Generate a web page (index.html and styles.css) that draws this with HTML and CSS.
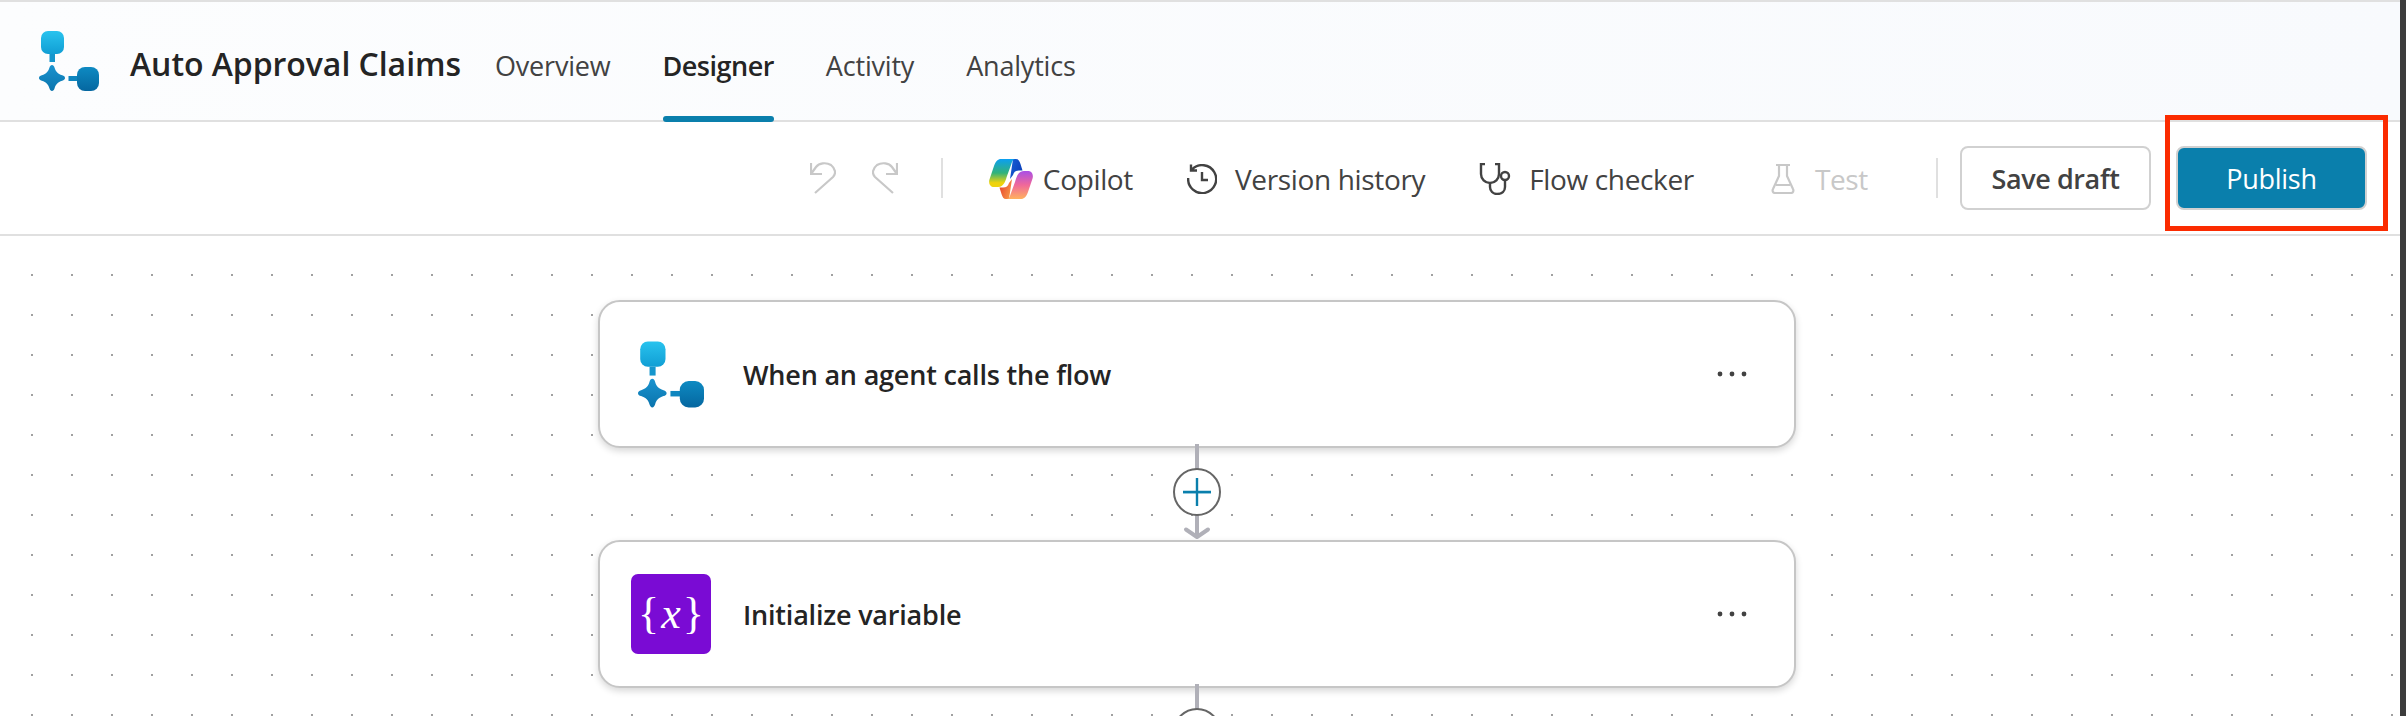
FILE: index.html
```html
<!DOCTYPE html>
<html lang="en">
  <head>
    <meta charset="UTF-8" />
    <title>Auto Approval Claims</title>
    <link rel="stylesheet" href="styles.css">
  </head>
  <body>
    <svg class="defs" width="0" height="0">
      <defs>
        <linearGradient id="g-top" x1="0" y1="0" x2="0" y2="1"><stop offset="0" stop-color="#29c3ee" /><stop offset="1" stop-color="#119ed4" /></linearGradient>
        <linearGradient id="g-star" x1="0" y1="0" x2="0" y2="1"><stop offset="0" stop-color="#1a93cf" /><stop offset="1" stop-color="#0a74ad" /></linearGradient>
        <linearGradient id="g-right" x1="0" y1="0" x2="0" y2="1"><stop offset="0" stop-color="#0e8ac2" /><stop offset="1" stop-color="#0567a0" /></linearGradient>
        <linearGradient id="g-left" x1="0" y1="0" x2="0" y2="1"><stop offset="0" stop-color="#0b9ff2" /><stop offset="0.5" stop-color="#32b27a" /><stop offset="0.85" stop-color="#efd30c" /></linearGradient>
        <linearGradient id="g-rib" x1="0" y1="0" x2="0" y2="1"><stop offset="0" stop-color="#ffb25e" /><stop offset="0.5" stop-color="#f0689a" /><stop offset="1" stop-color="#a94fe6" /></linearGradient>
        <linearGradient id="g-blue" x1="0" y1="0" x2="1" y2="0.6"><stop offset="0" stop-color="#1560d8" /><stop offset="1" stop-color="#0c3fb8" /></linearGradient>
        <linearGradient id="g-red" x1="0" y1="0" x2="1" y2="0.6"><stop offset="0" stop-color="#f9a34a" /><stop offset="1" stop-color="#e8492f" /></linearGradient>
        <symbol id="agent" viewBox="0 0 60 61">
          <rect x="2" y="0" width="23" height="23" rx="7" fill="url(#g-top)" />
          <rect x="10.5" y="23" width="5.5" height="8" fill="#1596cd" />
          <path d="M13 34c1.200 0 2 1 2.600 2.800 1 3.600 3 6 7.600 7.500 1.800.6 2.800 1.400 2.800 2.700s-1 2.100-2.800 2.700c-4.600 1.500-6.600 3.900-7.600 7.500-.6 1.800-1.400 2.800-2.600 2.800s-2-1-2.600-2.800c-1-3.600-3-6-7.600-7.500C1 49.100 0 48.300 0 47s1-2.100 2.800-2.700c4.600-1.500 6.600-3.900 7.600-7.500.6-1.800 1.400-2.800 2.600-2.800z" fill="url(#g-star)" />
          <rect x="29.500" y="45" width="9" height="5" fill="#0f86bf" />
          <rect x="38" y="36" width="22" height="24" rx="8" fill="url(#g-right)" />
        </symbol>
        <symbol id="link" viewBox="0 0 56 100">
          <path d="M28 0V93" stroke="#b0b0b8" stroke-width="4" fill="none" />
          <path d="M17 85.500L28 93L39 85.500" stroke="#b0b0b8" stroke-width="4" stroke-linecap="round" stroke-linejoin="round" fill="none" />
          <circle cx="28" cy="48" r="23" fill="#fff" stroke="#666" stroke-width="2" />
          <path d="M14 49H42" stroke="#bfe0ee" stroke-width="2" fill="none" />
          <path d="M28 34V62M14 48H42" stroke="#0a7fac" stroke-width="2.400" fill="none" />
        </symbol>
        <symbol id="more" viewBox="0 0 30 6">
          <circle cx="3" cy="3" r="2.400" fill="#424242" />
          <circle cx="15" cy="3" r="2.400" fill="#424242" />
          <circle cx="27" cy="3" r="2.400" fill="#424242" />
        </symbol>
      </defs>
    </svg>

    <header class="topbar">
      <svg class="logo" width="60" height="61"><use href="#agent" /></svg>
      <h1 class="flow-name">Auto Approval Claims</h1>
      <nav class="tabs">
        <a class="tab">Overview</a>
        <a class="tab tab-active">Designer</a>
        <a class="tab">Activity</a>
        <a class="tab">Analytics</a>
      </nav>
    </header>

    <div class="toolbar">
      <svg class="tb-icon undo" width="26" height="32" viewBox="0 0 26 32"><path d="M1 1V12H12M1 12L6 5C9 1 16 0 21 3C26 7 26 12 23 15L5 31" /></svg>
      <svg class="tb-icon redo" width="26" height="32" viewBox="0 0 26 32"><path d="M25 1V12H14M25 12L20 5C17 1 10 0 5 3C0 7 0 12 3 15L21 31" /></svg>
      <span class="sep sep-first"></span>
      <span class="tool tool-copilot">
        <svg width="44" height="40" viewBox="0 0 44 40">
          <path d="M24 0H27C29.500 0 30.500 2 31.500 5L33.500 11.500H30C26.500 11.500 25 13 24 16L21 20Z" fill="url(#g-blue)" />
          <path d="M12 0H26C24 0 23 3 22 6L18 17C17 20 15.500 28 9 28H5C1.500 28 -.5 25 .3 21L5 7C6.500 2.500 9 0 12 0Z" fill="url(#g-left)" />
          <path transform="rotate(180 22 20)" d="M24 0H27C29.500 0 30.500 2 31.500 5L33.500 11.500H30C26.500 11.500 25 13 24 16L21 20Z" fill="url(#g-red)" />
          <path transform="rotate(180 22 20)" d="M12 0H26C24 0 23 3 22 6L18 17C17 20 15.500 28 9 28H5C1.500 28 -.5 25 .3 21L5 7C6.500 2.500 9 0 12 0Z" fill="url(#g-rib)" />
        </svg>
        Copilot
      </span>
      <span class="tool">
        <svg class="tb-icon dark" width="30" height="30" viewBox="0 0 30 30"><path d="M5 5.500A14 14 0 1 1 1.200 14M4 .5V6.500H10M15 8V16H21" /></svg>
        Version history
      </span>
      <span class="tool">
        <svg class="tb-icon dark" width="32" height="32" viewBox="0 0 32 32"><path d="M6 1H2V11C2 16 6 20 11 20C16 20 20 16 20 11V1H16M11 20V24C11 28 14 31 18 31C23 31 26 28 26 24V17" /><circle cx="26" cy="13" r="4" /></svg>
        Flow checker
      </span>
      <span class="tool tool-off">
        <svg class="tb-icon" width="24" height="30" viewBox="0 0 24 30"><path d="M5 1H19M8 1V12L2 25C1 27 2 29 4 29H20C22 29 23 27 22 25L16 12V1M5 21H19" /></svg>
        Test
      </span>
      <span class="sep sep-last"></span>
      <button class="btn">Save draft</button>
      <button class="btn btn-primary">Publish</button>
    </div>
    <div class="callout"></div>

    <main class="canvas">
      <section class="node">
        <svg class="node-agent" width="66" height="68"><use href="#agent" /></svg>
        <span class="node-title">When an agent calls the flow</span>
        <svg class="node-more" width="30" height="6"><use href="#more" /></svg>
      </section>
      <svg class="link" width="56" height="100"><use href="#link" /></svg>
      <section class="node">
        <span class="var-icon"><span>{</span><i class="var-x">x</i><span>}</span></span>
        <span class="node-title">Initialize variable</span>
        <svg class="node-more" width="30" height="6"><use href="#more" /></svg>
      </section>
      <svg class="link" width="56" height="100"><use href="#link" /></svg>
    </main>
  </body>
</html>
```

FILE: styles.css
```css
* {
  box-sizing: border-box;
}

html, body {
  height: 100%;
}

body {
  margin: 0;
  overflow: hidden;
  position: relative;
  border-right: 6px solid #3c3c3c;
  background: #fff;
  font-family: "Open Sans", "Noto Sans", sans-serif;
  color: #424242;
}

.defs {
  position: absolute;
}

.topbar {
  height: 122px;
  display: flex;
  align-items: center;
  padding-left: 39px;
  border-top: 2px solid #e0e0e0;
  border-bottom: 2px solid #e0e0e0;
  background: linear-gradient(90deg, #fcfdfe, #f8fafd);
}

.logo {
  flex: none;
}

.flow-name {
  margin: 5px 0 0 31px;
  font-size: 32px;
  font-weight: 600;
  letter-spacing: -.05px;
  color: #242424;
  white-space: nowrap;
}

.tabs {
  display: flex;
  align-self: stretch;
  gap: 52px;
  margin-left: 34px;
}

.tab {
  display: flex;
  align-items: center;
  position: relative;
  padding-top: 8px;
  font-size: 27px;
  letter-spacing: -.2px;
  color: #424242;
}

.tab-active {
  font-weight: 600;
  letter-spacing: -.5px;
  color: #242424;
}

.tab-active::after {
  content: "";
  position: absolute;
  left: 0;
  right: 0;
  bottom: -2px;
  height: 6px;
  border-radius: 3px;
  background: #0a7fac;
}

.toolbar {
  height: 114px;
  display: flex;
  align-items: center;
  justify-content: flex-end;
  padding-right: 33px;
  border-bottom: 2px solid #e0e0e0;
  font-size: 28px;
  letter-spacing: -.35px;
  font-weight: 500;
}

.tb-icon {
  flex: none;
  fill: none;
  stroke: #c8c8c8;
  stroke-width: 2.200;
}

.tb-icon.dark {
  stroke: #424242;
  stroke-width: 2.400;
}

.redo {
  margin-left: 36px;
}

.sep {
  width: 2px;
  height: 40px;
  background: #e0e0e0;
}

.sep-first {
  margin: 0 19px 0 43px;
}

.sep-last {
  margin: 0 22px 0 68px;
}

.tool {
  display: flex;
  align-items: center;
  gap: 18px;
  padding: 0 27px;
  padding-top: 1px;
  white-space: nowrap;
}

.tool-copilot {
  gap: 10px;
}

.tool-off {
  margin-left: 23px;
  padding-right: 0;
  gap: 20px;
  color: #c8c8c8;
}

.btn {
  width: 191px;
  height: 64px;
  border: 2px solid #d1d1d1;
  border-radius: 8px;
  background: #fff;
  font-family: inherit;
  font-size: 27px;
  font-weight: 600;
  letter-spacing: -.4px;
  color: #424242;
}

.btn-primary {
  margin-left: 25px;
  background: #0a7fac;
  font-weight: 500;
  letter-spacing: -.3px;
  color: #fff;
}

/* red annotation box around Publish */
.callout {
  position: absolute;
  left: 2165px;
  top: 115px;
  width: 223px;
  height: 116px;
  border: 5px solid #fb2b00;
}

.canvas {
  height: 480px;
  display: flex;
  flex-direction: column;
  align-items: center;
  padding: 64px 6px 0 0;
  overflow: hidden;
  background-color: #fff;
  background-image: radial-gradient(circle at 1px 1px, #a0a0a0 1.100px, transparent 1.300px);
  background-size: 40px 40px;
  background-position: 31px -2px;
}

.node {
  flex: none;
  width: 1198px;
  height: 148px;
  display: flex;
  align-items: center;
  padding: 0 47px 0 31px;
  border: 2px solid #c6c6c6;
  border-radius: 22px;
  background: #fff;
  box-shadow: 0 3px 7px rgba(0, 0, 0, .16);
}

.node-agent {
  flex: none;
  margin: 2px 39px 0 7px;
}

.node-title {
  font-size: 27px;
  font-weight: 600;
  letter-spacing: -.2px;
  color: #242424;
}

.node-more {
  margin-left: auto;
}

.link {
  flex: none;
  position: relative;
  z-index: 1;
  margin: -4px 0;
}

.var-icon {
  flex: none;
  width: 80px;
  height: 80px;
  display: flex;
  align-items: center;
  justify-content: center;
  margin-right: 32px;
  border-radius: 7px;
  background: #7a0bd4;
  color: #fff;
  font-family: "Liberation Serif", serif;
  font-size: 44px;
  line-height: 1;
}

.var-x {
  margin: 0 2px;
}
```
